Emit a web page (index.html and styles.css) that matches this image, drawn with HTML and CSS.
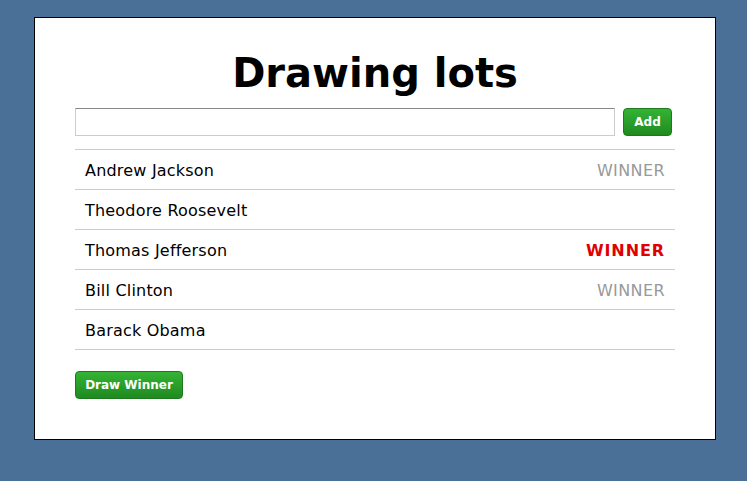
FILE: index.html
```html
<!DOCTYPE html>
<html>
<head>
<meta charset="utf-8">
<link rel="stylesheet" href="styles.css">
</head>
<body>
<div class="card">
  <h1 class="title">Drawing lots</h1>
  <div class="add-row">
    <input class="name-input" type="text">
    <button class="btn btn-add">Add</button>
  </div>
  <ul class="list">
    <li class="item"><span class="name">Andrew Jackson</span><span class="tag past">WINNER</span></li>
    <li class="item"><span class="name">Theodore Roosevelt</span></li>
    <li class="item"><span class="name">Thomas Jefferson</span><span class="tag current">WINNER</span></li>
    <li class="item"><span class="name">Bill Clinton</span><span class="tag past">WINNER</span></li>
    <li class="item"><span class="name">Barack Obama</span></li>
  </ul>
  <button class="btn btn-draw">Draw Winner</button>
</div>
</body>
</html>
```
FILE: styles.css
```css
html, body {
  margin: 0;
  padding: 0;
  background: #4a7098;
  height: 100%;
}
body {
  padding: 17px 0 0 34px;
  font-family: "DejaVu Sans", Verdana, sans-serif;
  box-sizing: border-box;
}
.card {
  width: 600px;
  background: #fff;
  border: 1px solid #000;
  padding: 25px 40px 40px 40px;
}
.title {
  margin: 0;
  font-size: 40px;
  line-height: 60px;
  font-weight: bold;
  text-align: center;
  color: #000;
}
.add-row {
  display: flex;
  align-items: stretch;
  gap: 8px;
  margin-top: 5px;
  padding-right: 3px;
}
.name-input {
  flex: 1;
  height: 28px;
  box-sizing: border-box;
  margin: 0;
  border: 1px solid #ccc;
  border-top-color: #888;
  padding: 0 4px;
  font: 14px "DejaVu Sans", sans-serif;
}
.btn {
  border: 1px solid #1c7a1c;
  border-radius: 4px;
  background: linear-gradient(#34b334, #208a20);
  color: #fff;
  font-family: "DejaVu Sans", Verdana, sans-serif;
  font-weight: bold;
  font-size: 12px;
  height: 28px;
  box-sizing: border-box;
  padding: 0;
  margin: 0;
}
.btn-add {
  width: 49px;
}
.btn-draw {
  width: 108px;
  margin-top: 21px;
  display: block;
}
.list {
  list-style: none;
  margin: 13px 0 0 0;
  padding: 0;
  border-top: 1px solid #ccc;
}
.item {
  display: flex;
  justify-content: space-between;
  align-items: center;
  height: 38px;
  padding: 1px 10px 0 10px;
  border-bottom: 1px solid #ccc;
  font-size: 16px;
  letter-spacing: 0.2px;
  color: #000;
}
.tag {
  font-size: 16px;
}
.tag.past {
  color: #999;
  letter-spacing: 0.4px;
}
.tag.current {
  color: #e00000;
  font-weight: bold;
  letter-spacing: 0.9px;
}
```
